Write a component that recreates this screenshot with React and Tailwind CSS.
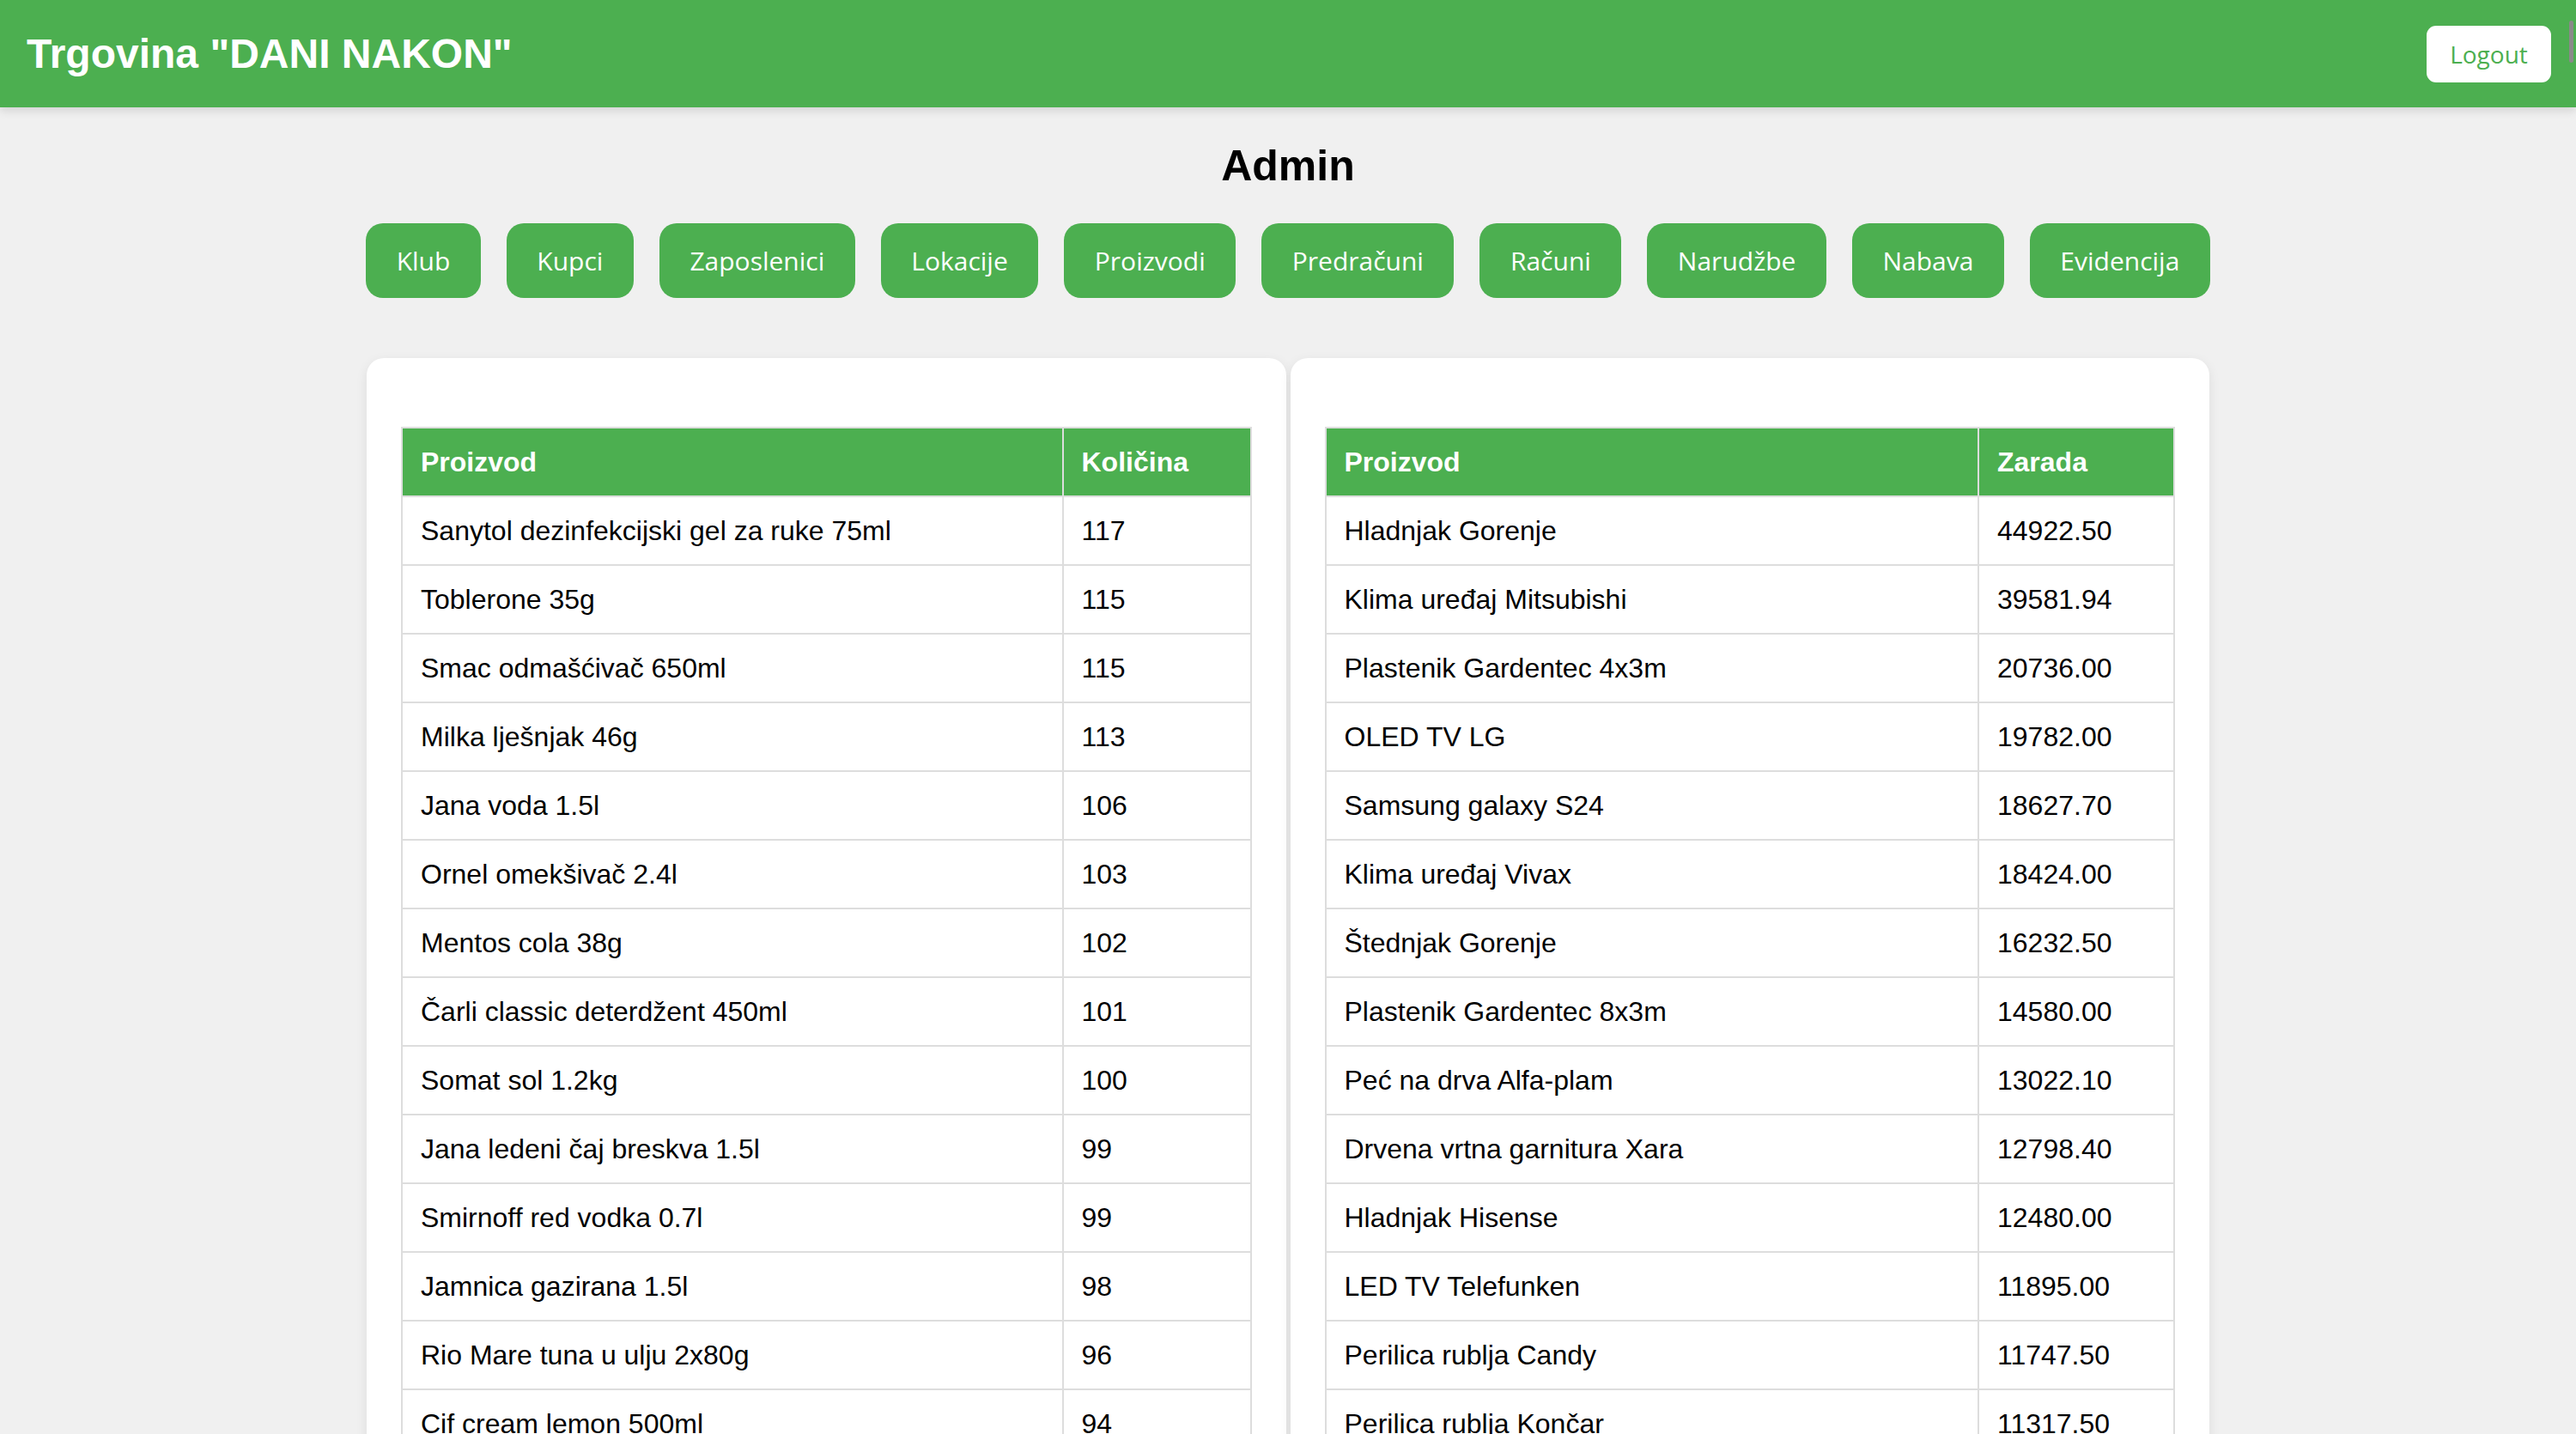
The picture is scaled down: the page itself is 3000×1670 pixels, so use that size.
import React from 'react';

const navItems = ['Klub', 'Kupci', 'Zaposlenici', 'Lokacije', 'Proizvodi', 'Predračuni', 'Računi', 'Narudžbe', 'Nabava', 'Evidencija'];

const stock = [
  ['Sanytol dezinfekcijski gel za ruke 75ml', '117'],
  ['Toblerone 35g', '115'],
  ['Smac odmašćivač 650ml', '115'],
  ['Milka lješnjak 46g', '113'],
  ['Jana voda 1.5l', '106'],
  ['Ornel omekšivač 2.4l', '103'],
  ['Mentos cola 38g', '102'],
  ['Čarli classic deterdžent 450ml', '101'],
  ['Somat sol 1.2kg', '100'],
  ['Jana ledeni čaj breskva 1.5l', '99'],
  ['Smirnoff red vodka 0.7l', '99'],
  ['Jamnica gazirana 1.5l', '98'],
  ['Rio Mare tuna u ulju 2x80g', '96'],
  ['Cif cream lemon 500ml', '94'],
];

const earnings = [
  ['Hladnjak Gorenje', '44922.50'],
  ['Klima uređaj Mitsubishi', '39581.94'],
  ['Plastenik Gardentec 4x3m', '20736.00'],
  ['OLED TV LG', '19782.00'],
  ['Samsung galaxy S24', '18627.70'],
  ['Klima uređaj Vivax', '18424.00'],
  ['Štednjak Gorenje', '16232.50'],
  ['Plastenik Gardentec 8x3m', '14580.00'],
  ['Peć na drva Alfa-plam', '13022.10'],
  ['Drvena vrtna garnitura Xara', '12798.40'],
  ['Hladnjak Hisense', '12480.00'],
  ['LED TV Telefunken', '11895.00'],
  ['Perilica rublja Candy', '11747.50'],
  ['Perilica rublja Končar', '11317.50'],
];

const DataTable = ({ title, rows, colWidth }) => (
  <table className="w-full border-collapse text-[32px]">
    <thead>
      <tr className="h-[80px] bg-[#4caf50] text-white">
        <th className="border-2 border-[#dddddd] px-[21px] text-left font-bold">Proizvod</th>
        <th className={`border-2 border-[#dddddd] px-[21px] text-left font-bold ${colWidth}`}>{title}</th>
      </tr>
    </thead>
    <tbody>
      {rows.map(([name, value]) => (
        <tr key={name} className="h-[80px] text-black">
          <td className="border-2 border-[#dddddd] px-[21px]">{name}</td>
          <td className="border-2 border-[#dddddd] px-[21px]">{value}</td>
        </tr>
      ))}
    </tbody>
  </table>
);

export default function App() {
  return (
    <div className="relative h-[1670px] overflow-hidden bg-[#f0f0f0] font-['Liberation_Sans',Arial,sans-serif]">
      {/* Header */}
      <header className="relative flex h-[125px] items-center justify-between bg-[#4caf50] pl-[31px] pr-[29px] shadow-[0_4px_10px_rgba(0,0,0,0.12)]">
        <h1 className="text-[48px] font-bold text-white">Trgovina "DANI NAKON"</h1>
        <button className="h-[66px] w-[145px] rounded-[11px] bg-white font-['Open_Sans',sans-serif] text-[28px] text-[#4caf50]">
          Logout
        </button>
        <div className="absolute right-[3px] top-[24px] h-[49px] w-[5px] rounded-full bg-[#8a8a8a]"></div>
      </header>

      {/* Admin */}
      <h2 className="mt-[39px] text-center text-[50px] font-bold leading-[58px] text-black">Admin</h2>

      <nav className="mt-[38px] flex justify-center gap-[30px]">
        {navItems.map((item) => (
          <button
            key={item}
            className="h-[87px] rounded-[20px] bg-[#4caf50] px-[35.5px] font-['Open_Sans',sans-serif] text-[30px] text-white"
          >
            {item}
          </button>
        ))}
      </nav>

      {/* Tables */}
      <div className="mx-auto mt-[70px] grid w-[2146px] grid-cols-2 gap-[5px]">
        <div className="rounded-[20px] bg-white px-[40px] pt-[80px] pb-[40px] shadow-[0_4px_14px_rgba(0,0,0,0.08)]">
          <DataTable title="Količina" rows={stock} colWidth="w-[219px]" />
        </div>
        <div className="rounded-[20px] bg-white px-[40px] pt-[80px] pb-[40px] shadow-[0_4px_14px_rgba(0,0,0,0.08)]">
          <DataTable title="Zarada" rows={earnings} colWidth="w-[228px]" />
        </div>
      </div>
    </div>
  );
}
